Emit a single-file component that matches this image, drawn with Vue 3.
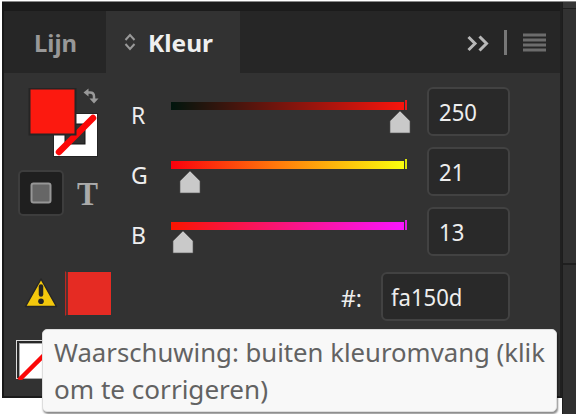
<script setup>
const channels = [
  { name: 'R', value: 250, key: 'r', thumb: 229 },
  { name: 'G', value: 21, key: 'g', thumb: 19 },
  { name: 'B', value: 13, key: 'b', thumb: 12 },
]
</script>

<template>
  <div class="stage">
    <div class="window">
      <div class="panel">
        <header class="tabs">
          <div class="tab muted"><svg class="label" width="50" height="38"><text x="2" y="28" textLength="43" lengthAdjust="spacingAndGlyphs">Lijn</text></svg></div>
          <div class="tab active">
            <svg class="sort" width="12" height="18" viewBox="0 0 12 18"><path d="M1.500 7 6 2l4.500 5M1.500 11 6 16l4.500-5" /></svg>
            <svg class="label" width="72" height="38"><text x="0" y="28" textLength="65" lengthAdjust="spacingAndGlyphs">Kleur</text></svg>
          </div>
          <div class="tools">
            <svg width="80" height="28" viewBox="0 0 80 28">
              <path class="chev" d="M2.500 8 9 14.500 2.500 21M13.500 7.500 20.500 14.500 13.500 21.500" />
              <path class="rule" d="M39.500 1v25" />
              <path class="menu" d="M57 6h23M57 11h23M57 16h23M57 21h23" />
            </svg>
          </div>
        </header>
        <div class="body">
          <div class="side">
            <svg class="swatches" width="80" height="76" viewBox="0 0 80 76">
              <rect x="25.500" y="25.500" width="44" height="43" fill="#fff" stroke="#242424" />
              <rect x="37" y="36" width="20" height="20" fill="#303030" stroke="#151515" />
              <path d="M31 64 65 30" stroke="#fb0808" stroke-width="6.500" stroke-linecap="round" />
              <rect x="1.500" y="0.500" width="46" height="46" fill="#fc190f" stroke="#252525" stroke-width="2" />
              <path d="M59 4.500h3q4 0 4 4v3" stroke="#999" stroke-width="2.500" fill="none" />
              <path d="M55.500 4.500l5-4v8zM61.500 10.500h9L66 15.500z" fill="#999" />
            </svg>
            <div class="modes">
              <div class="mode"><svg width="22" height="22"><rect x="1.500" y="1.500" width="19" height="19" rx="2" fill="#666" stroke="#969696" stroke-width="2" /></svg></div>
              <svg class="type" width="24" height="40"><text x="0" y="32" textLength="21" lengthAdjust="spacingAndGlyphs">T</text></svg>
            </div>
          </div>
          <div class="channels">
            <div v-for="c in channels" :key="c.key" class="channel" :class="c.key">
              <span class="name">{{ c.name }}</span>
              <div class="slider">
                <div class="track"><i></i><b></b></div>
                <svg class="thumb" :style="{ marginLeft: c.thumb - 11 + 'px' }" width="22" height="24" viewBox="0 0 22 24"><path d="M11 1 21 11V23H1V11z" fill="#c9c9c9" stroke="#505050" stroke-width=".6" /></svg>
              </div>
              <div class="field"><span>{{ c.value }}</span></div>
            </div>
          </div>
        </div>
        <div class="hexrow">
          <svg class="warning" width="34" height="32" viewBox="0 0 34 32">
            <path d="M17 2 32.500 29.500h-31z" fill="#f3c80c" stroke="#262626" stroke-width="1.500" stroke-linejoin="round" />
            <path d="M17 9.500v8" stroke="#242424" stroke-width="4.500" stroke-linecap="round" /><circle cx="17" cy="24.300" r="2.800" fill="#242424" />
          </svg>
          <div class="gamut"></div>
          <span class="hash">#:</span>
          <div class="field hex"><span>fa150d</span></div>
        </div>
        <svg class="none" width="32" height="40" viewBox="0 0 32 40">
          <rect x=".5" y=".5" width="44" height="38" fill="#292929" stroke="#ddd" />
          <rect x="3.500" y="3.500" width="41" height="35" fill="#fff" stroke="#aaa" />
          <path d="M3 40 32 11" stroke="#fb0808" stroke-width="4.500" />
        </svg>
      </div>
      <div class="neighbor"><div class="cap"></div><div class="upper"></div><div class="lower"></div></div>
    </div>
    <div class="tooltip">
      <svg width="500" height="74"><text x="1" y="27" textLength="491" lengthAdjust="spacingAndGlyphs">Waarschuwing: buiten kleuromvang (klik</text><text x="1" y="64" textLength="214" lengthAdjust="spacingAndGlyphs">om te corrigeren)</text></svg>
    </div>
  </div>
</template>

<style>
body { background: #fff; overflow: hidden; }
</style>
<style scoped>
* { box-sizing: border-box; }
svg { display: block; flex: none; }
.stage { width: 576px; height: 414px; position: relative; overflow: hidden; padding: 1px 0 0 2px; font-family: "Noto Sans", sans-serif; color: #eee; }
.window { display: flex; align-items: flex-start; height: 413px; border-top: 1px solid #888; }
.panel { width: 560px; height: 396px; border-left: 2px solid #181818; border-right: 2px solid #202020; border-bottom: 2px solid #1b1b1b; background: #323232; }
.tabs { height: 71px; border-top: 9px solid #1b1b1b; background: #262626; display: flex; }
.tab { height: 62px; display: flex; align-items: center; }
.muted { width: 102px; padding-left: 28px; }
.active { width: 134px; background: #323232; padding-left: 18px; gap: 12px; }
.label { font-size: 24px; font-weight: 700; fill: #efefef; margin-top: 1px; }
.muted .label { fill: #989898; }
.sort path { fill: none; stroke: #999; stroke-width: 2; }
.tools { margin-left: auto; padding: 18px 14px 0 0; }
.chev, .rule, .menu { fill: none; stroke: #b8b8b8; stroke-width: 3; }
.rule { stroke: #777; }
.menu { stroke: #6c6c6c; }
.body { display: flex; height: 188px; }
.side { width: 116px; padding: 15px 0 0 24px; }
.modes { display: flex; align-items: center; margin: 6px 0 0 -10px; }
.mode { width: 46px; height: 46px; background: #1f1f1f; border: 2px solid #3d3d3d; border-radius: 5px; display: grid; place-items: center; }
.type { margin: 0 0 0 13px; font: 700 34px "Liberation Serif", serif; fill: #aaa; }
.channels { display: flex; flex-direction: column; gap: 11px; padding-top: 14px; }
.channel { height: 49px; display: flex; }
.name { width: 51px; padding: 11px 0 0 11px; font-size: 23px; line-height: 34px; }
.slider { width: 256px; padding-top: 13px; }
.track { display: flex; align-items: end; gap: 1px; height: 10px; width: 237px; }
.track i { width: 233px; height: 8px; }
.track b { width: 2px; height: 10px; }
.r i { background: linear-gradient(90deg, #00150d, #fa150d); } .r b { background: #ef1717; }
.g i { background: linear-gradient(90deg, #fa000d, #ff780b 45%, #faff0d); } .g b { background: #dce60c; }
.b i { background: linear-gradient(90deg, #fa1500, #fa15ff); } .b b { background: #e516e5; }
.g .slider { padding-top: 12px; }
.g .thumb { margin-top: 1px; }
.field { width: 83px; height: 49px; border: 2px solid #424242; border-radius: 6px; background: #292929; padding-left: 10px; line-height: 47px; font-size: 23px; }
.field span { display: inline-block; transform: scaleX(.96); transform-origin: left; }
.hexrow { display: flex; height: 74px; padding: 11px 0 0 20px; }
.warning { margin-top: 5px; }
.gamut { width: 47px; height: 45px; margin: -1px 0 0 7px; background: #e52b23; border: 1px solid #293535; border-left: 1px solid #bd2822; box-shadow: inset 2px 0 #58312f; }
.hash { margin-left: 229px; width: 40px; font-size: 23px; line-height: 53px; }
.hex { width: 129px; padding-left: 8px; }
.none { margin: 5px 0 0 12px; }
.neighbor { flex: 1; height: 412px; border-left: 1px solid #1d1d1d; background: #1f1f1f; }
.cap { height: 6px; background: #373737; margin-bottom: 1px; }
.upper { height: 254px; background: #323232; margin-bottom: 2px; }
.lower { height: 149px; background: #303030; }
.tooltip { position: absolute; left: 42px; top: 329px; width: 515px; height: 83px; background: #f8f8f8; border: 1px solid #ddd; border-radius: 5px; padding: 5px 10px; box-shadow: 1px 2px 2px #0007; font: 25px "Noto Sans", sans-serif; }
.tooltip text { fill: #626262; }
</style>
